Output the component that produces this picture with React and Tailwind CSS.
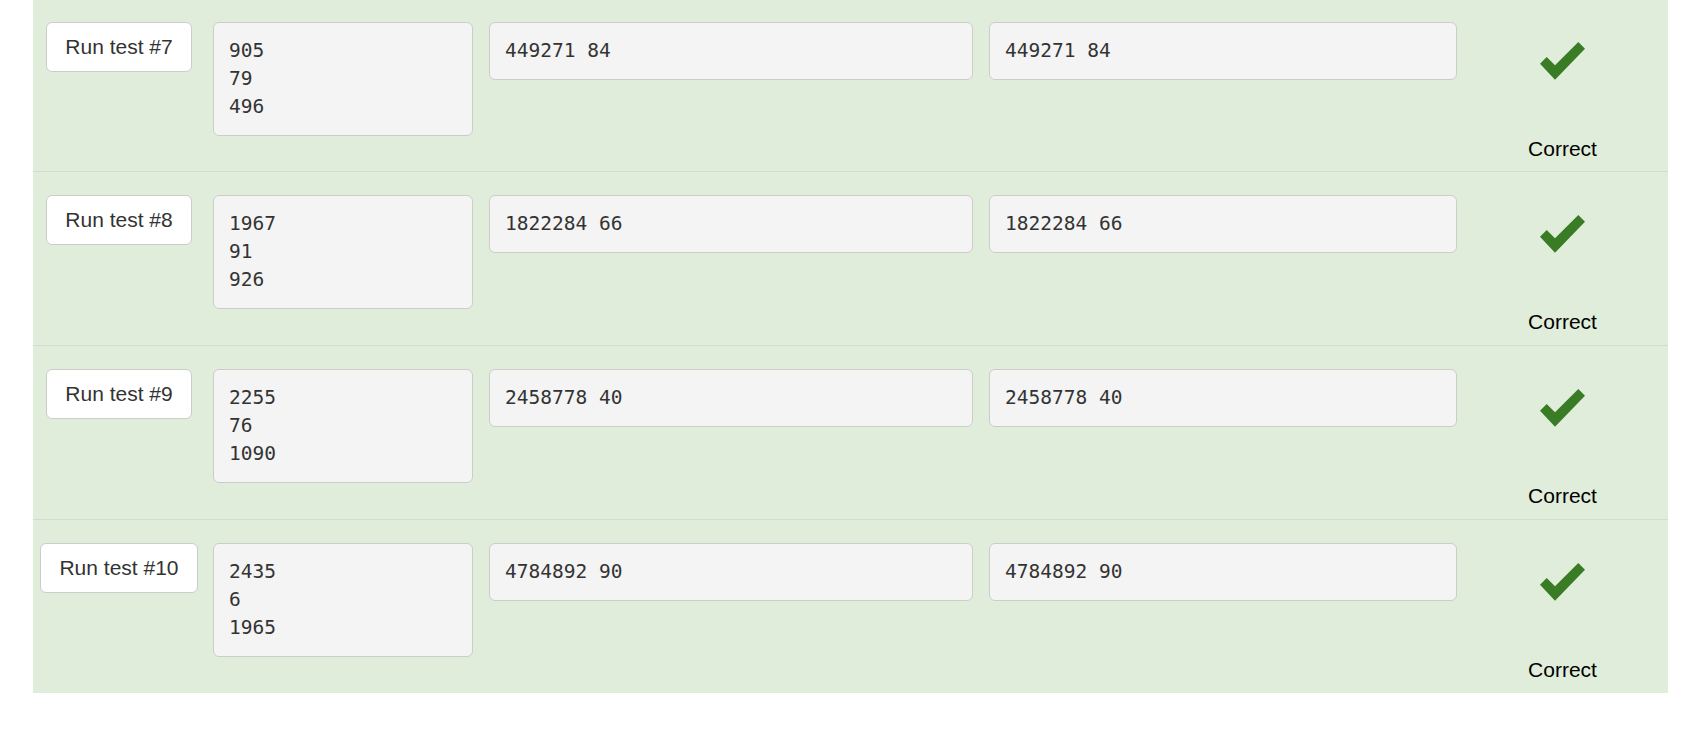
import React from "react";

const tests = [
  { n: 7, input: ["905", "79", "496"], output: "449271 84", expected: "449271 84" },
  { n: 8, input: ["1967", "91", "926"], output: "1822284 66", expected: "1822284 66" },
  { n: 9, input: ["2255", "76", "1090"], output: "2458778 40", expected: "2458778 40" },
  { n: 10, input: ["2435", "6", "1965"], output: "4784892 90", expected: "4784892 90" },
];

function CheckIcon() {
  return (
    <svg width="45" height="38" viewBox="0 0 45 38" className="block">
      <path d="M38.3 0 L45 6.7 L15 37.7 L0 21.7 L6.7 15 L15 23.3 Z" fill="#3a7c25" />
    </svg>
  );
}

function Pre({ lines, className }) {
  return (
    <div
      className={
        "rounded-[6px] border border-[#cccccc] bg-[#f4f4f4] px-[15px] py-[14px] font-['DejaVu_Sans_Mono',monospace] text-[19.5px] leading-[28px] text-[#333333] " +
        className
      }
    >
      {lines.map((l, i) => (
        <div key={i} className="whitespace-pre">
          {l}
        </div>
      ))}
    </div>
  );
}

function TestRow({ test, first }) {
  return (
    <div
      className={
        first
          ? "flex h-[171px] items-start pt-[22px]"
          : "flex h-[174px] items-start border-t border-[#d4dcd0] pt-[23px]"
      }
    >
      <div className="flex w-[172px] justify-center">
        <button className="rounded-[6px] border border-[#cccccc] bg-white px-[18px] py-[9px] font-['Liberation_Sans',Arial,sans-serif] text-[21px] leading-[30px] text-[#333333]">
          Run test #{test.n}
        </button>
      </div>
      <Pre lines={test.input} className="ml-[8px] w-[260px]" />
      <Pre lines={[test.output]} className="ml-[16px] w-[484px]" />
      <Pre lines={[test.expected]} className="ml-[16px] w-[468px]" />
      <div className="flex flex-1 flex-col items-center font-['Liberation_Sans',Arial,sans-serif]">
        <div className="mt-[20px]">
          <CheckIcon />
        </div>
        <div className="mt-[54px] text-[21px] leading-[30px] text-black">Correct</div>
      </div>
    </div>
  );
}

export default function App() {
  return (
    <div className="min-h-[738px] w-full bg-white">
      <div className="ml-[33px] w-[1635px] bg-[#e0eddb]">
        {tests.map((t, i) => (
          <TestRow key={t.n} test={t} first={i === 0} />
        ))}
      </div>
    </div>
  );
}
